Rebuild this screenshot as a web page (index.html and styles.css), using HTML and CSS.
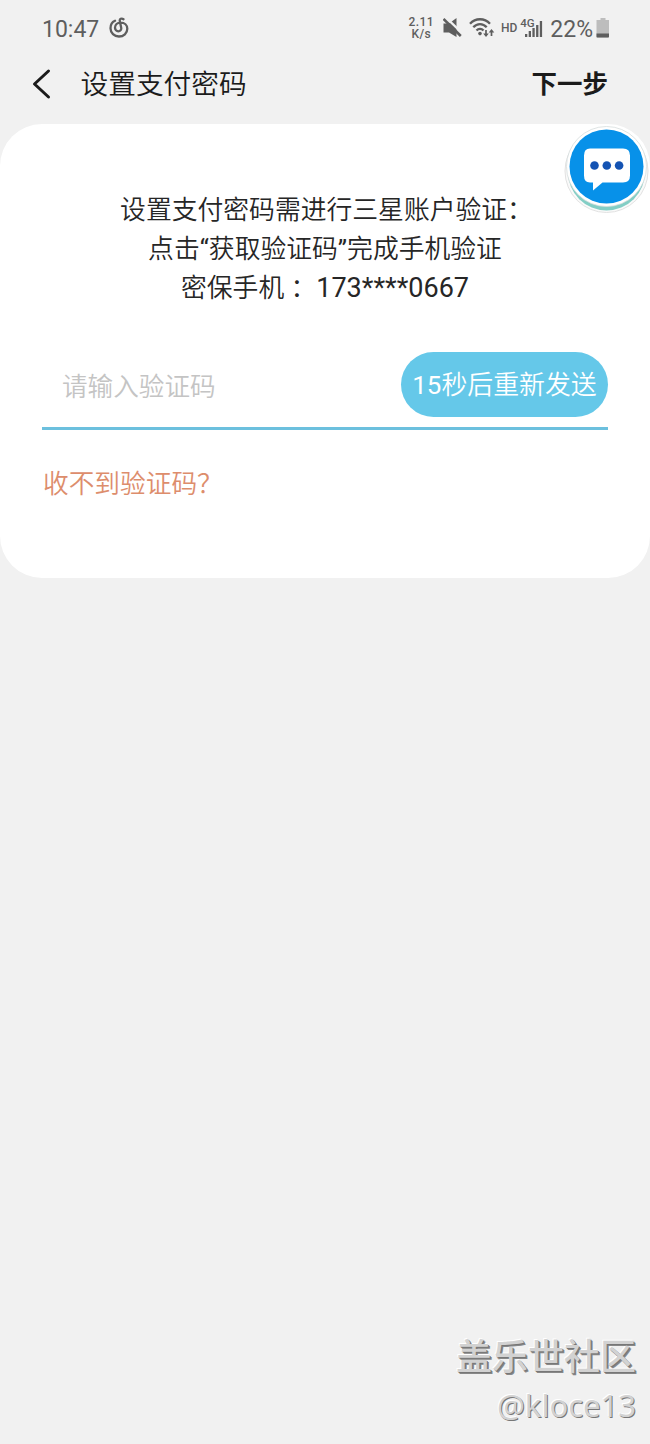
FILE: index.html
```html
<!DOCTYPE html>
<html lang="zh-CN">
<head>
    <meta charset="UTF-8">
    <title>设置支付密码</title>
    <link rel="stylesheet" href="styles.css">
</head>
<body>
    <div class="status-bar">
        <span class="time">10:47</span>
        <svg class="music-icon" width="20" height="22" viewBox="0 0 20 22" fill="none" stroke="#5e5e5e" stroke-width="2.300" stroke-linecap="round">
            <path d="M6 3.800C3.200 5 1.500 8 1.500 11.200c0 4.800 3.800 8.300 8.400 8.300 4.800 0 8.400-3.300 8.400-7.700 0-3.800-2.800-6.200-6.600-6.200-3.500 0-5.700 2.300-5.700 5.200 0 2 1.500 3.500 3.300 3.500s3.300-1.500 2.900-3.500L10.800 4c-.4-2 1.700-3.200 3.700-1.800"/>
        </svg>
        <div class="status-right">
            <div class="speed"><span>2.11</span><span>K/s</span></div>
            <svg class="mute-icon" width="20" height="22" viewBox="0 0 20 22">
                <path d="M.5 6.500h5.500l7.500-5.500V20L6 15.500H.5z" fill="#5e5e5e"/>
                <path d="M1.800-.5L20.500 17.500" stroke="#f1f1f1" stroke-width="2.400"/>
                <path d="M.5 2L17.800 19" stroke="#5e5e5e" stroke-width="2.600"/>
            </svg>
            <svg class="wifi-icon" width="26" height="22" viewBox="0 0 26 22" fill="none" stroke="#5e5e5e" stroke-width="2.300">
                <path d="M1 6.800C6.500.7 15.500.7 21 6.800"/>
                <path d="M4.300 10.300c3.800-4.300 9.600-4.300 13.400 0"/>
                <path d="M7.500 13.500c2-2.300 5-2.300 7 0"/>
                <circle cx="11" cy="16.600" r="1.800" fill="#5e5e5e" stroke="none"/>
                <path d="M17 13v5M22.500 19v-5" stroke-width="1.700"/>
                <path d="M14.200 16.500h5.600L17 20zM19.700 15.500h5.600L22.500 12z" fill="#5e5e5e" stroke="none"/>
            </svg>
            <span class="hd">HD</span>
            <div class="signal">
                <span class="network">4G</span>
                <svg class="bars" width="18" height="18" viewBox="0 0 18 18" fill="#5e5e5e">
                    <path d="M0 14h2.300v3H0zM3.700 11H6v6H3.700zM7.400 8h2.300v9H7.400zM11.100 5h2.300v12h-2.300zM14.800 1h2.300v16h-2.300z"/>
                </svg>
            </div>
            <span class="percent">22%</span>
            <svg class="battery" width="14" height="20" viewBox="0 0 14 20">
                <path d="M4.500 0h5v2H13v17.500H.5V2h4z" fill="#bdbdbd"/>
                <path d="M.5 15.500H13v3q0 1-1 1H1.500q-1 0-1-1z" fill="#5e5e5e"/>
            </svg>
        </div>
    </div>

    <div class="header">
        <svg class="back" width="20" height="32" viewBox="0 0 20 32" fill="none" stroke="#1b1b1b" stroke-width="3" stroke-linecap="round" stroke-linejoin="round">
            <path d="M17.500 3L3.500 16l14 13"/>
        </svg>
        <h1>设置支付密码</h1>
        <span class="next">下一步</span>
    </div>

    <div class="card">
        <div class="info">
            <p class="first">设置支付密码需进行三星账户验证：</p>
            <p>点击<span class="latin">“</span>获取验证码<span class="latin">”</span>完成手机验证</p>
            <p>密保手机 ：<span class="phone">173****0667</span></p>
        </div>
        <div class="code-row">
            <input class="code-input" type="text" placeholder="请输入验证码">
            <button class="resend"><span class="latin">15</span>秒后重新发送</button>
        </div>
        <a class="help">收不到验证码？</a>

        <!-- Schwebender Chat-Button -->
        <svg class="chat" width="86" height="92" viewBox="0 0 86 92">
            <circle cx="43.500" cy="47" r="41.500" fill="#fafafa" stroke="#e2e2e2"/>
            <circle cx="43.500" cy="48" r="38.500" fill="#83cec5"/>
            <circle cx="43.500" cy="42.500" r="40" fill="#fff" stroke="#d5dddd" stroke-width=".8"/>
            <circle cx="43.500" cy="42.500" r="37" fill="#0791e9"/>
            <path d="M27 24.500h33q7 0 7 7v20q0 7-7 7H39.500L30 66.500v-8h-3q-6 0-6-7v-20q0-7 6-7z" fill="#fff"/>
            <g fill="#1453b3">
                <circle cx="31.500" cy="41.500" r="4.300"/>
                <circle cx="43.800" cy="41.500" r="4.300"/>
                <circle cx="56.100" cy="41.500" r="4.300"/>
            </g>
        </svg>
    </div>

    <div class="watermark">
        <div class="community">盖乐世社区</div>
        <div class="user">@kloce13</div>
    </div>
</body>
</html>
```
FILE: styles.css
```css
* {
    box-sizing: border-box;
}

body {
    margin: 0;
    min-height: 1444px;
    display: flex;
    flex-direction: column;
    background-color: #f1f1f1;
    color: #262626;
    font-family: Roboto, "Noto Sans CJK SC", sans-serif;
}

.status-bar {
    height: 56px;
    padding: 0 40px 0 42px;
    display: flex;
    align-items: center;
    color: #5e5e5e;
    font-size: 23px;
}

.time {
    padding-top: 2px;
}

.music-icon {
    margin-left: 10px;
}

.status-right {
    margin-left: auto;
    display: flex;
    align-items: center;
}

.speed {
    display: flex;
    flex-direction: column;
    align-items: center;
    font-size: 12px;
    font-weight: 500;
    line-height: 12px;
    letter-spacing: 0.4px;
}

.mute-icon {
    margin-left: 9px;
}

.wifi-icon {
    margin-left: 6px;
}

.hd {
    margin-left: 6px;
    font-size: 12px;
    font-weight: 500;
}

.signal {
    position: relative;
    width: 22px;
    height: 20px;
    margin-left: 4px;
    display: flex;
    justify-content: flex-end;
    align-items: flex-end;
}

.network {
    position: absolute;
    top: 0;
    left: -1px;
    font-size: 11.5px;
    font-weight: 500;
    line-height: 10px;
}

.percent {
    margin-left: 7px;
    padding-top: 2px;
}

.battery {
    margin-left: 3px;
}

.header {
    height: 56px;
    margin-bottom: 12px;
    padding: 0 42px 0 31px;
    display: flex;
    align-items: center;
    color: #1b1b1b;
}

.header h1 {
    margin: 2px 0 0 29.5px;
    font-size: 27.7px;
    font-weight: 350;
    line-height: 40px;
}

.next {
    margin-left: auto;
    font-size: 25.5px;
    font-weight: 700;
    line-height: 40px;
}

.card {
    position: relative;
    height: 454px;
    padding: 67px 42px 0;
    background-color: #fff;
    border-radius: 42px;
}

.info {
    font-size: 25.8px;
    font-weight: 350;
    line-height: 39px;
    text-align: center;
}

.info p {
    margin: 0;
}

.info .first {
    padding-left: 3px;
}

.latin {
    font-weight: 400;
}

.phone {
    font-size: 27px;
    font-weight: 400;
}

.code-row {
    height: 78px;
    margin-top: 44px;
    display: flex;
    align-items: flex-start;
    border-bottom: 3px solid #6cc0de;
}

.code-input {
    flex: 1;
    min-width: 0;
    height: 70px;
    padding: 0 0 0 20px;
    border: none;
    outline: none;
    background: none;
    font-family: inherit;
    font-size: 25.6px;
    font-weight: 350;
}

.code-input::placeholder {
    color: #c4c4c4;
}

.resend {
    width: 207px;
    height: 65px;
    padding: 0 0 4px;
    border: none;
    border-radius: 33px;
    background-color: #65c8e9;
    color: #fff;
    font-family: inherit;
    font-size: 25.9px;
    font-weight: 350;
    white-space: nowrap;
}

.help {
    display: inline-block;
    margin-top: 34px;
    padding-left: 1px;
    color: #dd8d6c;
    font-size: 25.7px;
    font-weight: 350;
    line-height: 40px;
}

.chat {
    position: absolute;
    top: 0;
    right: 1.5px;
}

.watermark {
    margin-top: auto;
    padding: 0 14px 16px 0;
    color: #d2d2d2;
    text-align: right;
    text-shadow: 1px 1px 0 #777, 2px 2px 0 #888, -1px -1px 0 #fff;
}

.community {
    font-size: 36px;
    font-weight: 500;
    line-height: 48px;
}

.user {
    font-family: "Noto Sans", "Open Sans", sans-serif;
    font-size: 31px;
    line-height: 46px;
    text-shadow: 1px 1px 0 #777, -1px -1px 0 #fff;
}
```
